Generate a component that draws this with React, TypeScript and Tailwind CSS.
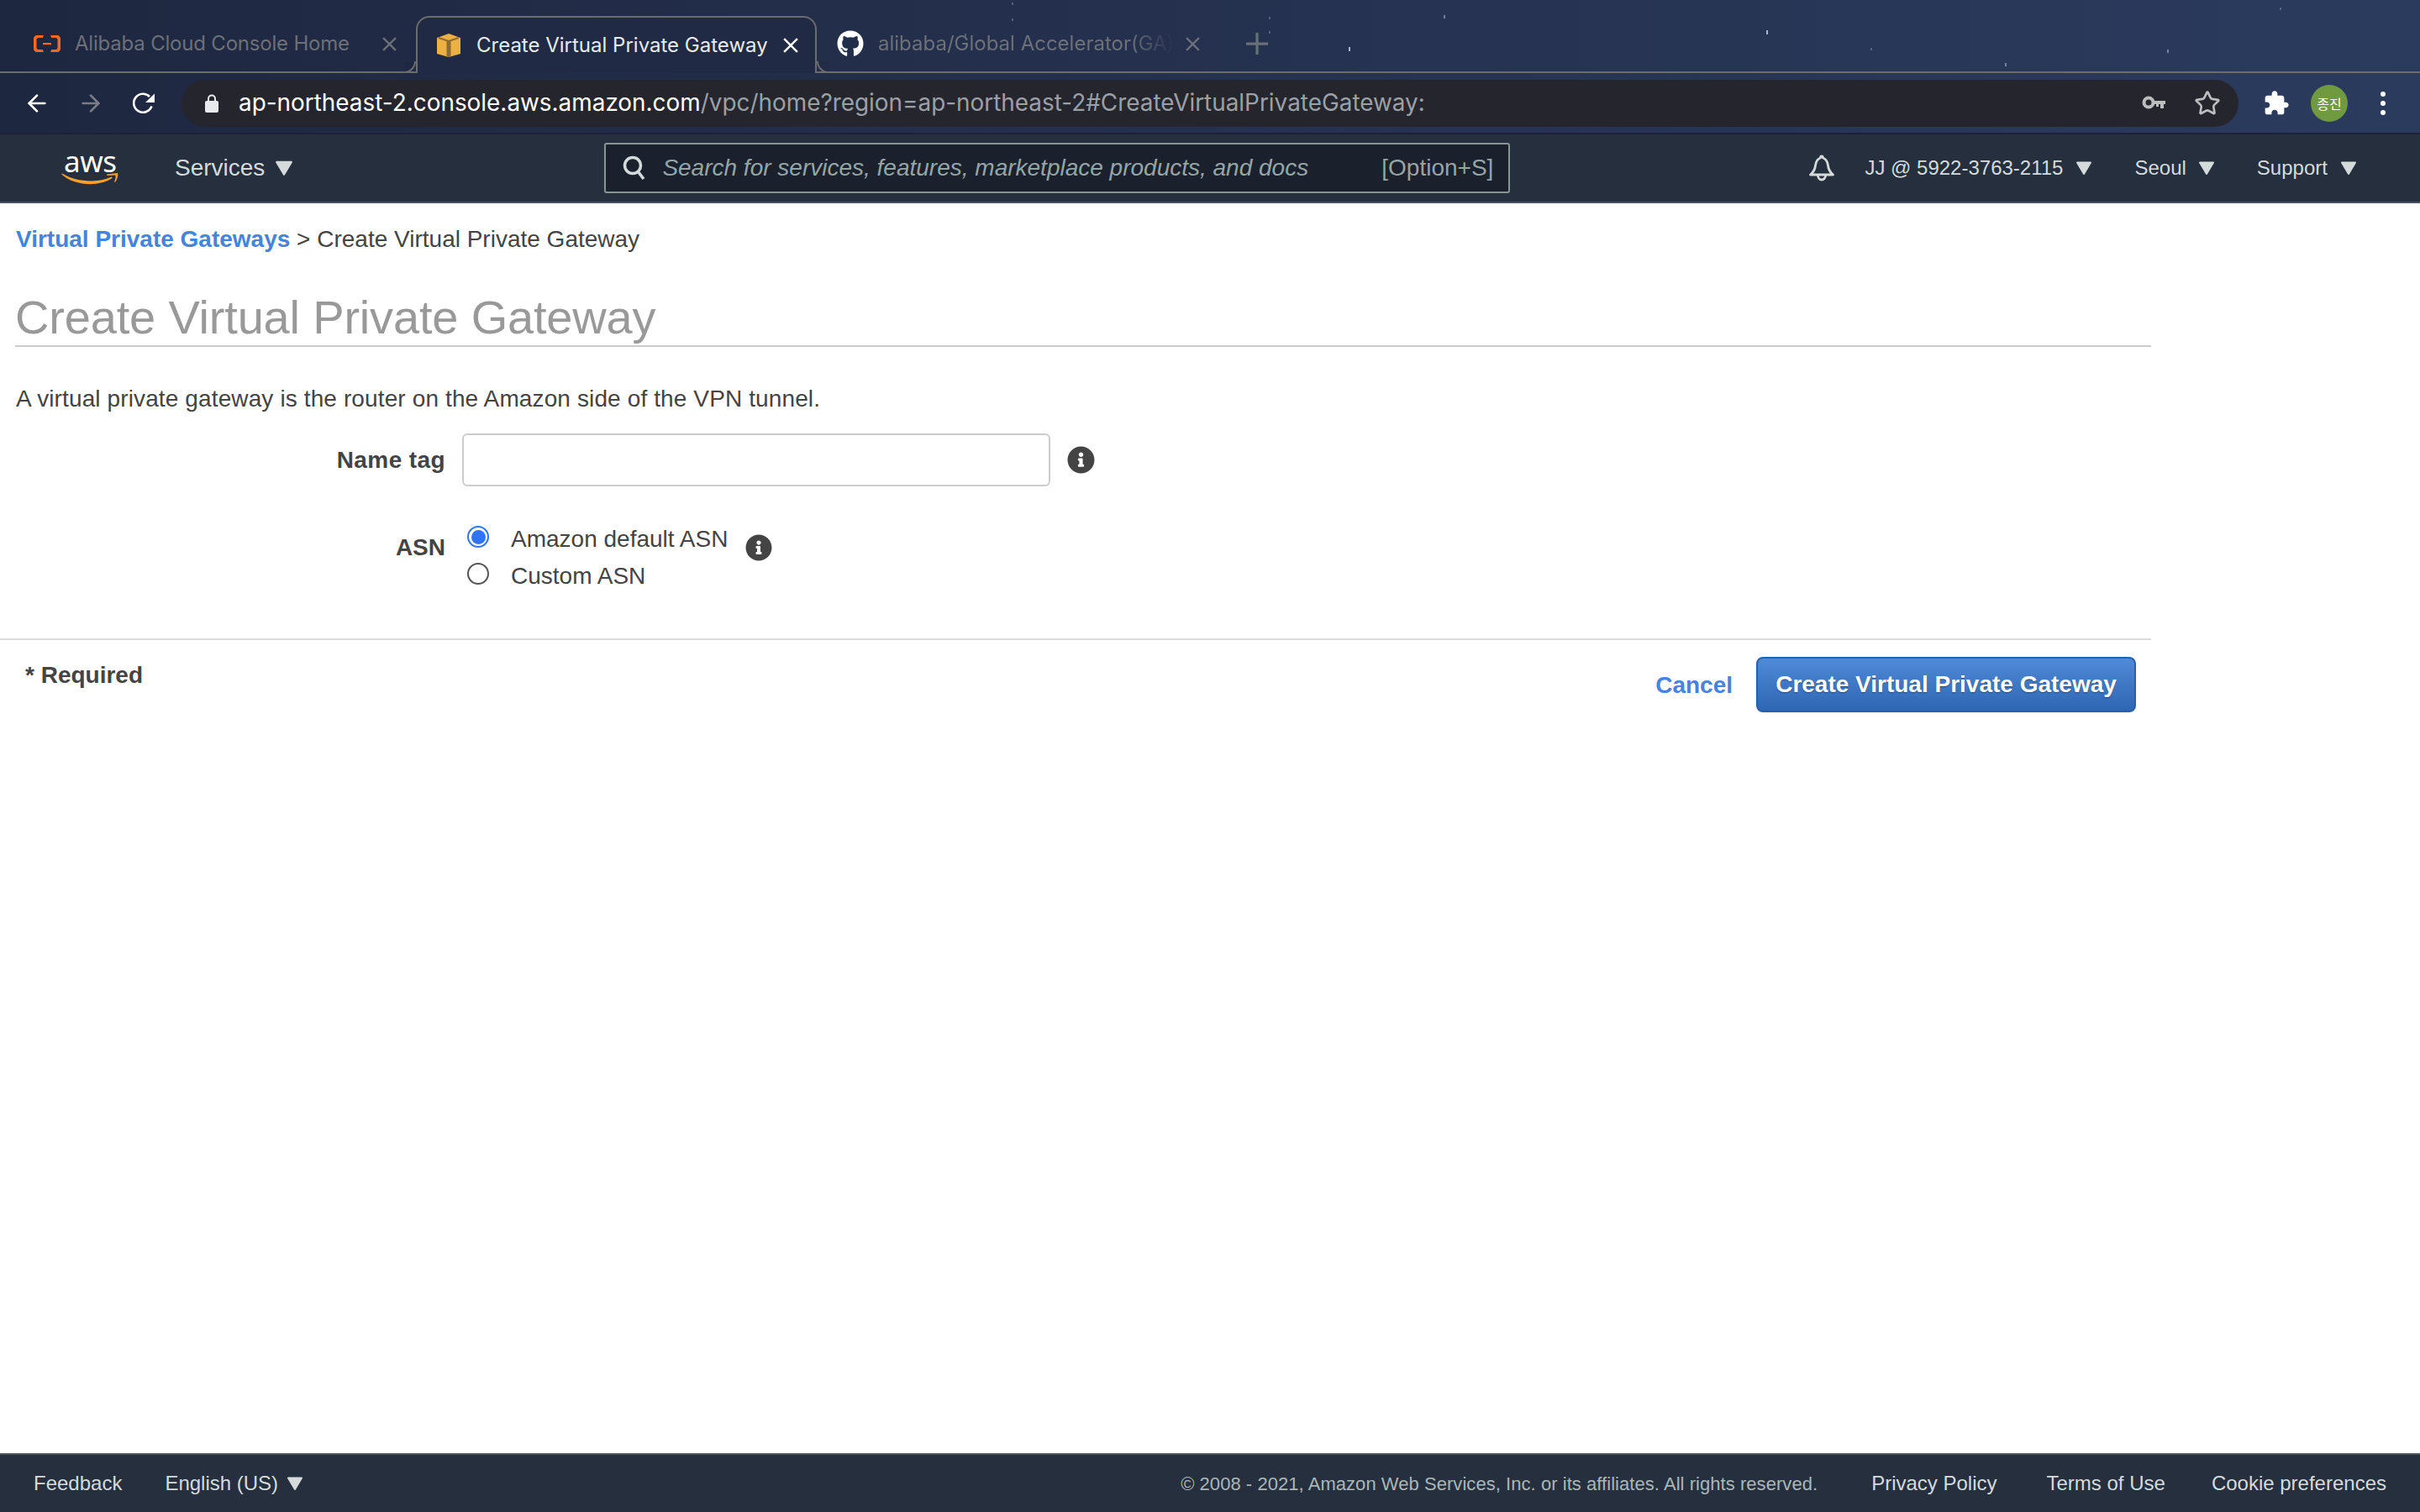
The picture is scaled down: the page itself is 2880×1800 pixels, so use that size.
import React from "react";
import { ArrowLeft, ArrowRight, Star } from "lucide-react";
import { FaGithub, FaInfoCircle } from "react-icons/fa";

const stars: [number, number, number][] = [
  [1204, 3, 2], [1204, 22, 2], [1510, 20, 2], [1510, 37, 2], [1718, 18, 3], [1605, 56, 4], [1148, 40, 2], [928, 40, 3],
  [2102, 36, 4], [2226, 57, 2], [2386, 75, 3], [2579, 59, 3], [2713, 9, 2],
];

function Tri({ className }: { className: string }) {
  return (
    <svg viewBox="0 0 20 16" className={className}>
      <path d="M2 1.500h16L10 15z" fill="#d5dbdb" stroke="#d5dbdb" strokeWidth="2" strokeLinejoin="round" />
    </svg>
  );
}

function TabClose({ className }: { className: string }) {
  return (
    <svg viewBox="0 0 16 16" className={className} fill="none" stroke="currentColor" strokeWidth="2.200">
      <path d="M1 1l14 14M15 1L1 15" />
    </svg>
  );
}

function AlibabaIcon() {
  return (
    <svg viewBox="0 0 32 20" className="w-[32px] h-[20px] shrink-0" fill="#f26a21">
      <path d="M4 0h8l-1.200 3H6C4.500 3 3.500 4 3.500 5v10c0 1 1 2 2.500 2h4.800L12 20H4c-2.200 0-4-1.800-4-4V4c0-2.200 1.800-4 4-4z" />
      <path d="M28 0h-8l1.200 3H26c1.500 0 2.500 1 2.500 2v10c0 1-1 2-2.500 2h-4.800L20 20h8c2.200 0 4-1.800 4-4V4c0-2.200-1.800-4-4-4z" />
      <rect x="11" y="9" width="10" height="2.200" />
    </svg>
  );
}

function BoxIcon() {
  return (
    <svg viewBox="0 0 28 28" className="w-[28px] h-[28px] shrink-0">
      <path d="M14 0l14 5v19l-14 4-14-4V5z" fill="#ecb043" />
      <path d="M2 5l12 4 12-4" fill="none" stroke="#8a6a35" strokeWidth="2" />
      <path d="M11.500 9h5v19h-5z" fill="#8a6a35" />
    </svg>
  );
}

function Reload() {
  return (
    <svg viewBox="0 0 26 26" className="w-[26px] h-[26px]" fill="none">
      <path d="M22.500 16.500A11 11 0 1 1 20 5" stroke="white" strokeWidth="2.600" />
      <path d="M15 12L26 1.500V12z" fill="white" />
    </svg>
  );
}

function Lock() {
  return (
    <svg viewBox="0 0 16 22" className="w-[16px] h-[22px] shrink-0">
      <rect y="8" width="16" height="14" rx="2" fill="#e8eaed" />
      <path d="M4 9V5.500a4 4 0 0 1 8 0V9" fill="none" stroke="#e8eaed" strokeWidth="2" />
    </svg>
  );
}

function KeyIcon() {
  return (
    <svg viewBox="0 0 28 18" className="w-[28px] h-[18px]" fill="none">
      <circle cx="8" cy="8" r="5.500" stroke="#bdbdbd" strokeWidth="4" />
      <path d="M13 6h15v4h-2v5h-4v-5h-2v3h-3V10h-4z" fill="#bdbdbd" />
    </svg>
  );
}

function Puzzle() {
  return (
    <svg viewBox="0 0 24 24" className="w-[32px] h-[32px]" fill="white">
      <path d="M20.500 11H19V7c0-1.100-.9-2-2-2h-4V3.500C13 2.120 11.880 1 10.500 1S8 2.120 8 3.500V5H4c-1.100 0-1.990.9-1.990 2v3.800H3.500c1.490 0 2.700 1.210 2.700 2.700s-1.210 2.700-2.700 2.700H2V20c0 1.100.9 2 2 2h3.800v-1.500c0-1.490 1.210-2.700 2.700-2.700 1.490 0 2.700 1.210 2.700 2.700V22H17c1.100 0 2-.9 2-2v-4h1.500c1.380 0 2.500-1.120 2.500-2.500S21.880 11 20.500 11z" />
    </svg>
  );
}

function Bell() {
  return (
    <svg viewBox="0 0 32 32" className="w-[32px] h-[32px]" fill="none" stroke="#d5dbdb" strokeWidth="2.800" strokeLinejoin="round">
      <path d="M16 2c-1 0-1.500 1-1.500 2C10 5.500 9 9 8.500 13c-.5 5-2.500 8-6 11h27c-3.500-3-5.500-6-6-11-.5-4-1.500-7.500-6-9 0-1-.5-2-1.500-2z" />
      <path d="M11.500 25a4.500 5 0 0 0 9 0" />
    </svg>
  );
}

function AwsLogo() {
  return (
    <div className="relative w-[68px] h-[40px] shrink-0">
      <div className="absolute left-[3px] top-[-11px] text-[35px] leading-[46px] text-white font-['Noto_Sans',sans-serif] tracking-[-0.5px]">aws</div>
      <svg viewBox="0 0 68 16" className="absolute left-0 top-[25px] w-[68px] h-[16px]" fill="#f79f2d">
        <path d="M1 1.500C18 12 44 13 60 5.500l.8 1.300C46 17.500 16 17 .3 2.500z" />
        <path d="M54 2.500l13-1.500c1 3-.5 8-3 11l-1-.5c1-2.500 2-5.500 1.500-8L54.500 4z" />
      </svg>
    </div>
  );
}

export default function App() {
  return (
    <div className="h-[1800px] w-[2880px] flex flex-col bg-white font-['Liberation_Sans',Arial,sans-serif] overflow-hidden">
      <div className="relative bg-gradient-to-r from-[#1e2740] to-[#2b3b5e] border-b-2 border-[#1f1f3d]">
        {stars.map(([x, y, s], i) => (
          <span
            key={i}
            className="absolute w-[2px] bg-[#aab6d6]"
            style={{ left: x, top: y, height: s + 1, opacity: s >= 4 ? 1 : s === 3 ? 0.6 : 0.35 }}
          />
        ))}
        <div className="relative h-[87px] flex items-end border-b-2 border-[#6b6c6e] font-['Inter',sans-serif] text-[24px]">
          <div className="w-[495px] h-[66px] flex items-center pl-[40px] pr-[23px] shrink-0">
            <AlibabaIcon />
            <span className="ml-[17px] text-[#6c7077] whitespace-nowrap tracking-[-0.2px]">Alibaba Cloud Console Home</span>
            <TabClose className="ml-auto w-[17px] h-[17px] text-[#6c7077]" />
          </div>
          <div className="relative w-[477px] h-[68px] -mb-[2px] flex items-center pl-[23px] pr-[20px] shrink-0 bg-[#202a44] border-2 border-b-0 border-[#6b6c6e] rounded-t-[16px]">
            <span className="absolute left-[-16px] bottom-0 w-[14px] h-[14px] bg-[#1f2841] border-r-2 border-b-2 border-[#6b6c6e] rounded-br-[14px]" />
            <span className="absolute right-[-16px] bottom-0 w-[14px] h-[14px] bg-[#212b46] border-l-2 border-b-2 border-[#6b6c6e] rounded-bl-[14px]" />
            <BoxIcon />
            <span className="ml-[19px] text-[#e8eaed] whitespace-nowrap">Create Virtual Private Gateway</span>
            <TabClose className="ml-auto w-[18px] h-[18px] text-white" />
          </div>
          <div className="w-[628px] h-[66px] flex items-center pl-[24px] shrink-0">
            <FaGithub className="w-[32px] h-[32px] text-white shrink-0" />
            <span className="ml-[17px] text-[#6c7077] whitespace-nowrap shrink-0 [mask-image:linear-gradient(to_right,black_85%,transparent)]">alibaba/Global Accelerator(GA)</span>
            <TabClose className="ml-auto w-[17px] h-[17px] text-[#6c7077] shrink-0" />
            <svg viewBox="0 0 24 24" className="ml-[55px] mr-[91px] w-[26px] h-[26px] shrink-0" fill="none" stroke="#6a6e76" strokeWidth="3">
              <path d="M12 0v24M0 12h24" />
            </svg>
          </div>
        </div>
        <div className="h-[71px] flex items-center">
          <div className="w-[216px] flex items-center pl-[28px] shrink-0">
            <ArrowLeft className="w-[32px] h-[32px] text-white" strokeWidth={2} />
            <ArrowRight className="ml-[32px] w-[32px] h-[32px] text-[#7a7d86]" strokeWidth={2} />
            <span className="ml-[34px]"><Reload /></span>
          </div>
          <div className="w-[2448px] h-[56px] rounded-full bg-[#25252e] flex items-center pl-[28px] pr-[21px] shrink-0">
            <Lock />
            <span className="ml-[24px] text-[27.9px] font-['Inter',sans-serif] text-white whitespace-nowrap">
              ap-northeast-2.console.aws.amazon.com
              <span className="text-[#9aa0a6]">/vpc/home?region=ap-northeast-2#CreateVirtualPrivateGateway:</span>
            </span>
            <span className="ml-auto"><KeyIcon /></span>
            <Star className="ml-[34px] w-[32px] h-[32px] text-[#bdbdbd]" strokeWidth={2} />
          </div>
          <div className="ml-[29px]"><Puzzle /></div>
          <div className="ml-[25px] w-[44px] h-[44px] rounded-full bg-[#6f9a3f] flex items-center justify-center text-[16px] text-white font-['Noto_Sans_CJK_KR',sans-serif]">종진</div>
          <div className="ml-[39px] flex flex-col gap-[5px]">
            <span className="w-[6px] h-[6px] rounded-full bg-white" />
            <span className="w-[6px] h-[6px] rounded-full bg-white" />
            <span className="w-[6px] h-[6px] rounded-full bg-white" />
          </div>
        </div>
      </div>

      <header className="h-[82px] bg-[#252f3e] border-b-2 border-[#4b5361] flex items-center pl-[73px] shrink-0 text-[#d5dbdb]">
        <AwsLogo />
        <span className="ml-[67px] text-[28px] whitespace-nowrap">Services</span>
        <Tri className="ml-[12px] w-[22px] h-[18px]" />
        <div className="ml-[370px] w-[1078px] h-[60px] bg-[#1a202c] border-2 border-[#879596] rounded-[3px] flex items-center pl-[20px] pr-[18px] shrink-0">
          <svg viewBox="0 0 28 30" className="w-[28px] h-[30px]" fill="none" stroke="#d5dbdb" strokeWidth="3.500">
            <circle cx="12" cy="12" r="9.500" />
            <path d="M18 19l7 9" />
          </svg>
          <span className="ml-[19px] text-[28px] italic text-[#95a5a6] whitespace-nowrap">Search for services, features, marketplace products, and docs</span>
          <span className="ml-auto text-[28px] text-[#95a5a6]">[Option+S]</span>
        </div>
        <span className="ml-[355px]"><Bell /></span>
        <span className="ml-[35px] text-[24px] whitespace-nowrap">JJ @ 5922-3763-2115</span>
        <Tri className="ml-[15px] w-[20px] h-[16px]" />
        <span className="ml-[50px] text-[24px]">Seoul</span>
        <Tri className="ml-[14px] w-[20px] h-[16px]" />
        <span className="ml-[50px] text-[24px]">Support</span>
        <Tri className="ml-[15px] w-[20px] h-[16px]" />
      </header>

      <main className="flex-1 w-[2560px] text-[#444]">
        <div className="pl-[19px] pt-[27px] text-[28px] leading-[32px] whitespace-nowrap">
          <span className="font-bold text-[#4484dc]">Virtual Private Gateways</span> &gt; Create Virtual Private Gateway
        </div>
        <h1 className="ml-[18px] mt-[44px] text-[56px] leading-[66px] tracking-[-0.18px] text-[#999] border-b-2 border-[#ccc] whitespace-nowrap">Create Virtual Private Gateway</h1>
        <p className="pl-[19px] mt-[46px] text-[28px] leading-[32px] tracking-[0.12px]">A virtual private gateway is the router on the Amazon side of the VPN tunnel.</p>

        <div className="mt-[25px] flex items-center h-[63px]">
          <label className="w-[530px] text-right text-[28px] font-bold tracking-[0.4px]">Name tag</label>
          <div className="ml-[20px] w-[700px] h-[63px] border-2 border-[#ccc] rounded-[6px] bg-white shrink-0" />
          <FaInfoCircle className="ml-[20px] w-[33px] h-[33px] text-[#444]" />
        </div>

        <div className="mt-[43px] flex h-[96px] items-start">
          <label className="w-[530px] mt-[14px] text-right text-[28px] leading-[32px] font-bold">ASN</label>
          <div className="ml-[26px] mt-[4px] flex flex-col gap-[12px]">
            <div className="flex items-center h-[32px]">
              <span className="w-[26px] h-[26px] rounded-full border-2 border-[#2f74ff] flex items-center justify-center -mt-[6px]">
                <span className="w-[17px] h-[17px] rounded-full bg-[#2f74ff]" />
              </span>
              <span className="ml-[26px] text-[28px] whitespace-nowrap">Amazon default ASN</span>
            </div>
            <div className="flex items-center h-[32px]">
              <span className="w-[26px] h-[26px] rounded-full border-2 border-[#555] -mt-[6px]" />
              <span className="ml-[26px] text-[28px] whitespace-nowrap">Custom ASN</span>
            </div>
          </div>
          <FaInfoCircle className="ml-[21px] mt-[14px] w-[32px] h-[32px] text-[#444]" />
        </div>

        <div className="mt-[42px] border-t-2 border-[#ddd] flex justify-between items-start">
          <span className="ml-[30px] mt-[26px] text-[28px] leading-[32px] font-bold">* Required</span>
          <div className="mt-[20px] mr-[18px] flex items-center">
            <span className="mt-[2px] text-[28px] font-bold text-[#4484dc]">Cancel</span>
            <button className="ml-[28px] w-[452px] h-[66px] rounded-[8px] border-2 border-[#2a5fae] bg-gradient-to-b from-[#4f8ad8] to-[#2e66b2] text-white text-[28px] font-bold [text-shadow:0_1px_1px_rgba(0,0,0,0.4)]">Create Virtual Private Gateway</button>
          </div>
        </div>
      </main>

      <footer className="h-[70px] bg-[#252f3e] border-t-2 border-[#4b5361] flex items-center pl-[40px] pr-[40px] text-[24px] text-[#d5dbdb] shrink-0">
        <span>Feedback</span>
        <span className="ml-[51px]">English (US)</span>
        <Tri className="ml-[10px] w-[20px] h-[16px]" />
        <span className="ml-auto text-[22px] tracking-[0.05px] text-[#aab7b8] whitespace-nowrap">© 2008 - 2021, Amazon Web Services, Inc. or its affiliates. All rights reserved.</span>
        <span className="ml-[64px]">Privacy Policy</span>
        <span className="ml-[59px]">Terms of Use</span>
        <span className="ml-[55px]">Cookie preferences</span>
      </footer>
    </div>
  );
}
